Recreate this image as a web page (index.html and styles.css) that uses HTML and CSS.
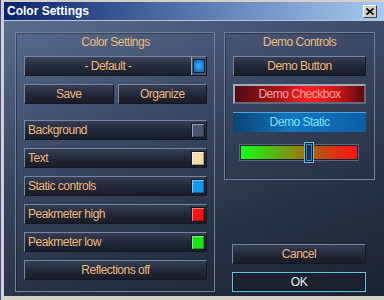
FILE: index.html
```html
<!DOCTYPE html>
<html lang="en">
<head>
  <meta charset="UTF-8">
  <title>Color Settings</title>
  <link rel="stylesheet" href="styles.css">
</head>
<body>
  <div class="window">
    <div class="titlebar">
      <span class="title">Color Settings</span>
      <span class="close">
        <svg width="8" height="7" viewBox="0 0 8 7"><path d="M0.5 0.5L7.5 6.5M7.5 0.5L0.5 6.5" stroke="#000" stroke-width="1.7"/></svg>
      </span>
    </div>

    <div class="client">
      <div class="group group-colors">
        <div class="group-title">Color Settings</div>
        <div class="combo">
          <span class="combo-label">- Default -</span>
          <span class="combo-btn"><span class="combo-dot"></span></span>
        </div>
        <div class="pair">
          <div class="btn">Save</div>
          <div class="btn">Organize</div>
        </div>
        <div class="color-list">
          <div class="btn row">Background <span class="swatch sw-bg"></span></div>
          <div class="btn row">Text <span class="swatch sw-text"></span></div>
          <div class="btn row">Static controls <span class="swatch sw-static"></span></div>
          <div class="btn row">Peakmeter high <span class="swatch sw-high"></span></div>
          <div class="btn row">Peakmeter low <span class="swatch sw-low"></span></div>
          <div class="btn">Reflections off</div>
        </div>
      </div>

      <div class="side">
        <div class="group group-demo">
          <div class="group-title">Demo Controls</div>
          <div class="btn">Demo Button</div>
          <div class="demo-check">Demo Checkbox</div>
          <div class="demo-static">Demo Static</div>
          <div class="slider">
            <div class="track"></div>
            <div class="thumb"></div>
          </div>
        </div>
        <div class="actions">
          <div class="btn">Cancel</div>
          <div class="btn btn-ok">OK</div>
        </div>
      </div>
    </div>
  </div>
</body>
</html>
```

FILE: styles.css
```css
* {
  margin: 0;
  padding: 0;
  box-sizing: border-box;
}

html, body {
  width: 384px;
  height: 300px;
  overflow: hidden;
  background: #d4d0c8;
}

body {
  font-family: "Liberation Sans", Arial, sans-serif;
  font-size: 12px;
  letter-spacing: -0.5px;
  color: #f0b87a;
}

.window {
  width: 384px;
  height: 300px;
  display: flex;
  flex-direction: column;
  padding: 2px 0 4px 3px;
  border-left: 1px solid #3a48b8;
  background: #d4d0c8;
}

.titlebar {
  height: 18px;
  display: flex;
  align-items: center;
  justify-content: space-between;
  padding: 0 7px 0 3px;
  background: linear-gradient(90deg, #0a246a, #a6caf0);
}

.title {
  color: #fff;
  font: bold 12px "Liberation Sans", Arial, sans-serif;
  letter-spacing: 0;
}

.close {
  width: 14px;
  height: 13px;
  display: flex;
  align-items: center;
  justify-content: center;
  background: #d4d0c8;
  border: 1px solid;
  border-color: #fff #404040 #404040 #fff;
}

.client {
  flex: 1;
  display: flex;
  gap: 9px;
  padding: 11px 0 0 11px;
  border-top: 1px solid #b8c4dc;
  background: linear-gradient(160deg, #5a6c8e 0%, #3c4a66 35%, #283044 70%, #1c2230 100%);
}

.group {
  border: 1px solid #72809c;
  box-shadow: inset 1px 1px 0 rgba(0, 0, 0, 0.3);
}

.group-title {
  height: 23px;
  padding-top: 1px;
  line-height: 16px;
  text-align: center;
  color: #eeba80;
}

.group-colors {
  width: 200px;
  height: 260px;
  padding: 0 7px 0 8px;
  display: flex;
  flex-direction: column;
}

/* buttons */
.btn {
  height: 20px;
  line-height: 18px;
  text-align: center;
  border: 1px solid;
  border-color: #7886a2 #141824 #141824 #7886a2;
  background: linear-gradient(#363e54, #222738 55%, #191d29);
  color: #f0b87a;
}

.combo {
  height: 20px;
  display: flex;
  margin-bottom: 8px;
  border: 1px solid;
  border-color: #7886a2 #141824 #141824 #7886a2;
  background: linear-gradient(#3a4258, #252a3b 55%, #1b1f2b);
}

.combo-label {
  flex: 1;
  text-align: center;
  line-height: 18px;
}

.combo-btn {
  width: 15px;
  display: flex;
  align-items: center;
  justify-content: center;
  border-left: 1px solid #9aa6bc;
  background: #4a5470;
}

.combo-dot {
  width: 10px;
  height: 12px;
  background: radial-gradient(circle, #3cb4ff, #0a5cae);
  box-shadow: 0 0 0 1px #1a2438;
}

.pair {
  display: flex;
  gap: 4px;
  margin-bottom: 16px;
}

.pair .btn {
  flex: 1;
}

.color-list {
  display: flex;
  flex-direction: column;
  gap: 8px;
}

.row {
  display: flex;
  align-items: center;
  justify-content: space-between;
  padding: 0 2px 0 3px;
}

.swatch {
  width: 12px;
  height: 13px;
  box-shadow: 0 0 0 1px #151a26, inset 1px 1px 0 rgba(255, 255, 255, 0.45), inset -1px -1px 0 rgba(0, 0, 0, 0.3);
}

.sw-bg { background: #4a5670; }
.sw-text { background: #f2dcac; }
.sw-static { background: #1898e4; }
.sw-high { background: #f41414; }
.sw-low { background: #18e418; }

/* right column */
.side {
  width: 151px;
  height: 260px;
  display: flex;
  flex-direction: column;
}

.group-demo {
  height: 148px;
  padding: 0 8px;
  display: flex;
  flex-direction: column;
}

.demo-check {
  height: 20px;
  margin-top: 8px;
  line-height: 16px;
  text-align: center;
  border: 2px solid;
  border-color: #a2aabb #626a7c #626a7c #a2aabb;
  background: linear-gradient(90deg, #4e0a12, #b01418 35%, #ff2020 58%, #c01414 82%, #5a0a12);
  color: #ffa4a0;
}

.demo-static {
  height: 20px;
  margin-top: 8px;
  line-height: 19px;
  text-align: center;
  border-top: 1px solid #4ea6dc;
  background: linear-gradient(90deg, #0a4478, #1278c0 45%, #0c5ea4);
  color: #7fe2ff;
}

.slider {
  position: relative;
  height: 21px;
  margin: 10px 8px 0 7px;
  display: flex;
  align-items: center;
}

.track {
  width: 100%;
  height: 15px;
  border: 1px solid #1c2230;
  box-shadow: 0 0 0 1px #5a6680;
  background: linear-gradient(90deg, #14ff14, #5ab412 30%, #987a10 52%, #c84412 72%, #ff1414);
}

.thumb {
  position: absolute;
  left: 64px;
  top: 0;
  width: 10px;
  height: 21px;
  border: 1px solid #5ec4ec;
  background: #1c3452;
  box-shadow: inset 0 0 0 1px #0c1828, inset 0 0 0 2px #3e86b0;
}

.actions {
  margin-top: auto;
  padding: 0 9px 0 8px;
  display: flex;
  flex-direction: column;
  gap: 8px;
}

.btn-ok {
  border: 1px solid #5ccae8;
  background: #1c2230;
  box-shadow: inset 0 0 0 1px #0e1420;
  color: #e8f0f8;
}
```
